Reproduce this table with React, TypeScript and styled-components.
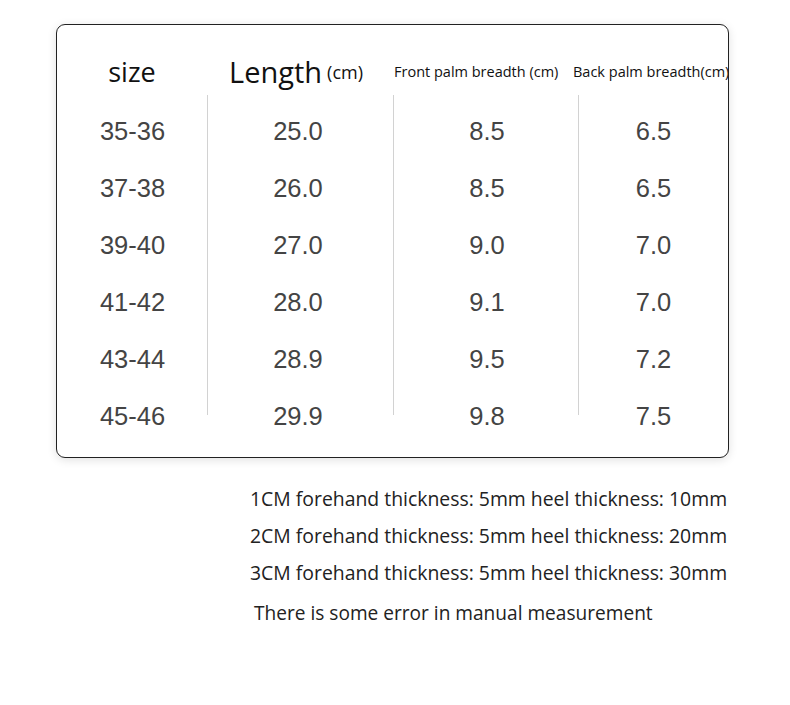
import React from "react";
import styled, { createGlobalStyle } from "styled-components";

const Global = createGlobalStyle`
  html, body { margin: 0; padding: 0; background: #ffffff; }
  body { width: 790px; height: 705px; overflow: hidden; }
`;

const Page = styled.div`
  width: 790px;
  height: 705px;
  padding: 24px 0 0 56px;
  box-sizing: border-box;
  display: flex;
  flex-direction: column;
`;

const Card = styled.div`
  width: 673px;
  height: 434px;
  box-sizing: border-box;
  border: 1px solid #222;
  border-radius: 9px;
  background: #fff;
  box-shadow: 0 2px 10px rgba(0, 0, 0, 0.12);
  overflow: hidden;
  display: flex;
`;

const Column = styled.div`
  width: ${(p) => p.$w}px;
  flex: none;
  display: flex;
  flex-direction: column;
  position: relative;
  &::before {
    content: "";
    display: ${(p) => (p.$divider ? "block" : "none")};
    position: absolute;
    left: 0;
    top: 70px;
    height: 320px;
    width: 1px;
    background: #d2d2d2;
  }
`;

const HeadCell = styled.div`
  height: 71px;
  padding-top: 22px;
  box-sizing: border-box;
  display: flex;
  align-items: center;
  justify-content: ${(p) => (p.$left ? "flex-start" : "center")};
  font-family: "Open Sans", "Noto Sans", sans-serif;
  color: #111;
  white-space: nowrap;
  font-size: ${(p) => p.$size}px;
  margin-left: ${(p) => p.$ml ?? 0}px;
  margin-right: ${(p) => p.$mr ?? 0}px;
`;

const Small = styled.span`
  font-size: 18px;
  margin-left: 5px;
  padding-top: 1px;
`;

const Body = styled.div`
  padding-top: 7px;
  display: flex;
  flex-direction: column;
`;

const Cell = styled.div`
  height: 57px;
  display: flex;
  align-items: center;
  justify-content: center;
  font-family: "Liberation Sans", Arial, sans-serif;
  font-size: 25.5px;
  color: #444;
  margin-left: ${(p) => p.$ml ?? 0}px;
`;

const Notes = styled.div`
  display: flex;
  flex-direction: column;
  padding: 22px 0 0 194px;
  font-family: "Open Sans", "Noto Sans", sans-serif;
  color: #222;
`;

const Note = styled.div`
  line-height: 37px;
  white-space: nowrap;
  padding-left: ${(p) => p.$pl ?? 0}px;
  margin-top: ${(p) => p.$mt ?? 0}px;
  font-size: ${(p) => p.$size ?? 19.4}px;
`;

const rows = [
  ["35-36", "25.0", "8.5", "6.5"],
  ["37-38", "26.0", "8.5", "6.5"],
  ["39-40", "27.0", "9.0", "7.0"],
  ["41-42", "28.0", "9.1", "7.0"],
  ["43-44", "28.9", "9.5", "7.2"],
  ["45-46", "29.9", "9.8", "7.5"],
];

const columns = [
  { w: 150, divider: false, ml: 1 },
  { w: 186, divider: true, ml: -4 },
  { w: 185, divider: true, ml: 3 },
  { w: 150, divider: true, ml: 1 },
];

export default function App() {
  return (
    <>
      <Global />
      <Page>
        <Card>
          {columns.map((c, ci) => (
            <Column key={ci} $w={c.w} $divider={c.divider}>
              {ci === 0 && <HeadCell $size={27}>size</HeadCell>}
              {ci === 1 && (
                <HeadCell $size={29} $mr={8}>
                  Length<Small>(cm)</Small>
                </HeadCell>
              )}
              {ci === 2 && (
                <HeadCell $size={14.5} $left $ml={1}>
                  Front palm breadth (cm)
                </HeadCell>
              )}
              {ci === 3 && (
                <HeadCell $size={14.5} $left $ml={-5}>
                  Back palm breadth(cm)
                </HeadCell>
              )}
              <Body>
                {rows.map((r, ri) => (
                  <Cell key={ri} $ml={c.ml}>
                    {r[ci]}
                  </Cell>
                ))}
              </Body>
            </Column>
          ))}
        </Card>
        <Notes>
          <Note>1CM forehand thickness: 5mm heel thickness: 10mm</Note>
          <Note>2CM forehand thickness: 5mm heel thickness: 20mm</Note>
          <Note>3CM forehand thickness: 5mm heel thickness: 30mm</Note>
          <Note $pl={4} $mt={4} $size={19.1}>
            There is some error in manual measurement
          </Note>
        </Notes>
      </Page>
    </>
  );
}
